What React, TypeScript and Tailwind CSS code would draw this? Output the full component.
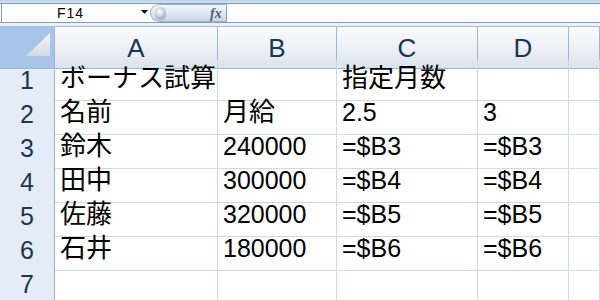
import React from "react";

const rows: [string, string, string, string][] = [
  ["ボーナス試算", "", "指定月数", ""],
  ["名前", "月給", "2.5", "3"],
  ["鈴木", "240000", "=$B3", "=$B3"],
  ["田中", "300000", "=$B4", "=$B4"],
  ["佐藤", "320000", "=$B5", "=$B5"],
  ["石井", "180000", "=$B6", "=$B6"],
  ["", "", "", ""],
];

const cols = "grid-cols-[55px_163px_119px_141px_91px_1fr]";

const isCjk = (s: string) => /[^\x00-\x7f]/.test(s);

export default function App() {
  const font = { fontFamily: '"Liberation Sans", "Noto Sans CJK JP", sans-serif' };
  return (
    <div className="w-[600px] h-[300px] overflow-hidden bg-white" style={font}>
      {/* top strip */}
      <div className="h-[3px] bg-gradient-to-b from-[#bfd0e8] to-[#d3e0f0]" />
      {/* formula bar */}
      <div className="h-[20px] flex border-y border-[#7f9cc2] bg-white">
        <div className="w-[149px] h-full border-l border-[#7f9cc2] ml-[1px] flex items-center relative">
          <span className="absolute left-[55px] top-[1px] text-[14px] leading-[16px] text-black tracking-[1px]">F14</span>
          <svg className="absolute left-[139px] top-[6px]" width="7" height="5" viewBox="0 0 7 5">
            <path d="M0 0 L7 0 L3.5 4 Z" fill="#000" />
          </svg>
        </div>
        <div className="w-[77px] h-full rounded-l-full bg-gradient-to-b from-[#f4f7fb] via-[#dfe7f2] to-[#c8d5e7] border border-[#9fb3cf] border-r-[#8aa3c4] relative">
          <div className="absolute left-[4px] top-[2px] w-[11px] h-[13px] rounded-full bg-[radial-gradient(circle_at_40%_35%,#ffffff,#b4bcc6_60%,#8f98a4)]" />
          <span
            className="absolute left-[59px] top-[0px] text-[14px] leading-[17px] italic font-bold text-[#56606d]"
            style={{ fontFamily: '"Liberation Serif", serif' }}
          >
            fx
          </span>
        </div>
        <div className="flex-1 bg-white" />
      </div>
      {/* gap strip */}
      <div className="h-[3px] bg-[#edf1f7]" />
      <div className="h-[1px] bg-[#a9bdd6]" />
      {/* header row */}
      <div className={`grid ${cols} h-[33px]`}>
        <div className="border-r border-b border-[#9eb6ce] bg-[#a9c4e9] relative">
          <svg className="absolute left-[26px] top-[6px]" width="24" height="23" viewBox="0 0 24 23">
            <defs>
              <linearGradient id="tri" x1="0" y1="0" x2="0" y2="1">
                <stop offset="0" stopColor="#f4f6f9" />
                <stop offset="1" stopColor="#d5dbe3" />
              </linearGradient>
            </defs>
            <path d="M24 0 L24 23 L0 23 Z" fill="url(#tri)" />
          </svg>
        </div>
        {["A", "B", "C", "D", ""].map((c, i) => (
          <div
            key={i}
            className="border-r border-b border-[#9eb6ce] bg-gradient-to-b from-[#f9fafc] via-[#eef1f6] to-[#dce3ec] flex items-center justify-center text-[26px] text-[#1c3553] pt-[2px]"
          >
            {c}
          </div>
        ))}
      </div>
      {rows.map((r, ri) => (
        <div key={ri} className={`grid ${cols} h-[34px]`}>
          <div className="border-r border-b border-[#9eb6ce] bg-[#e4ecf7] flex items-center justify-center text-[25px] text-[#1c3553] pt-[2px]">
            {ri + 1}
          </div>
          {[...r, ""].map((v, ci) => (
            <div
              key={ci}
              className={`border-r border-b border-[#d0d7e5] leading-[34px] text-black whitespace-nowrap pt-[1px] pl-[5px] ${
                isCjk(v) ? "text-[26px]" : "text-[25px]"
              }`}
            >
              {v}
            </div>
          ))}
        </div>
      ))}
    </div>
  );
}
